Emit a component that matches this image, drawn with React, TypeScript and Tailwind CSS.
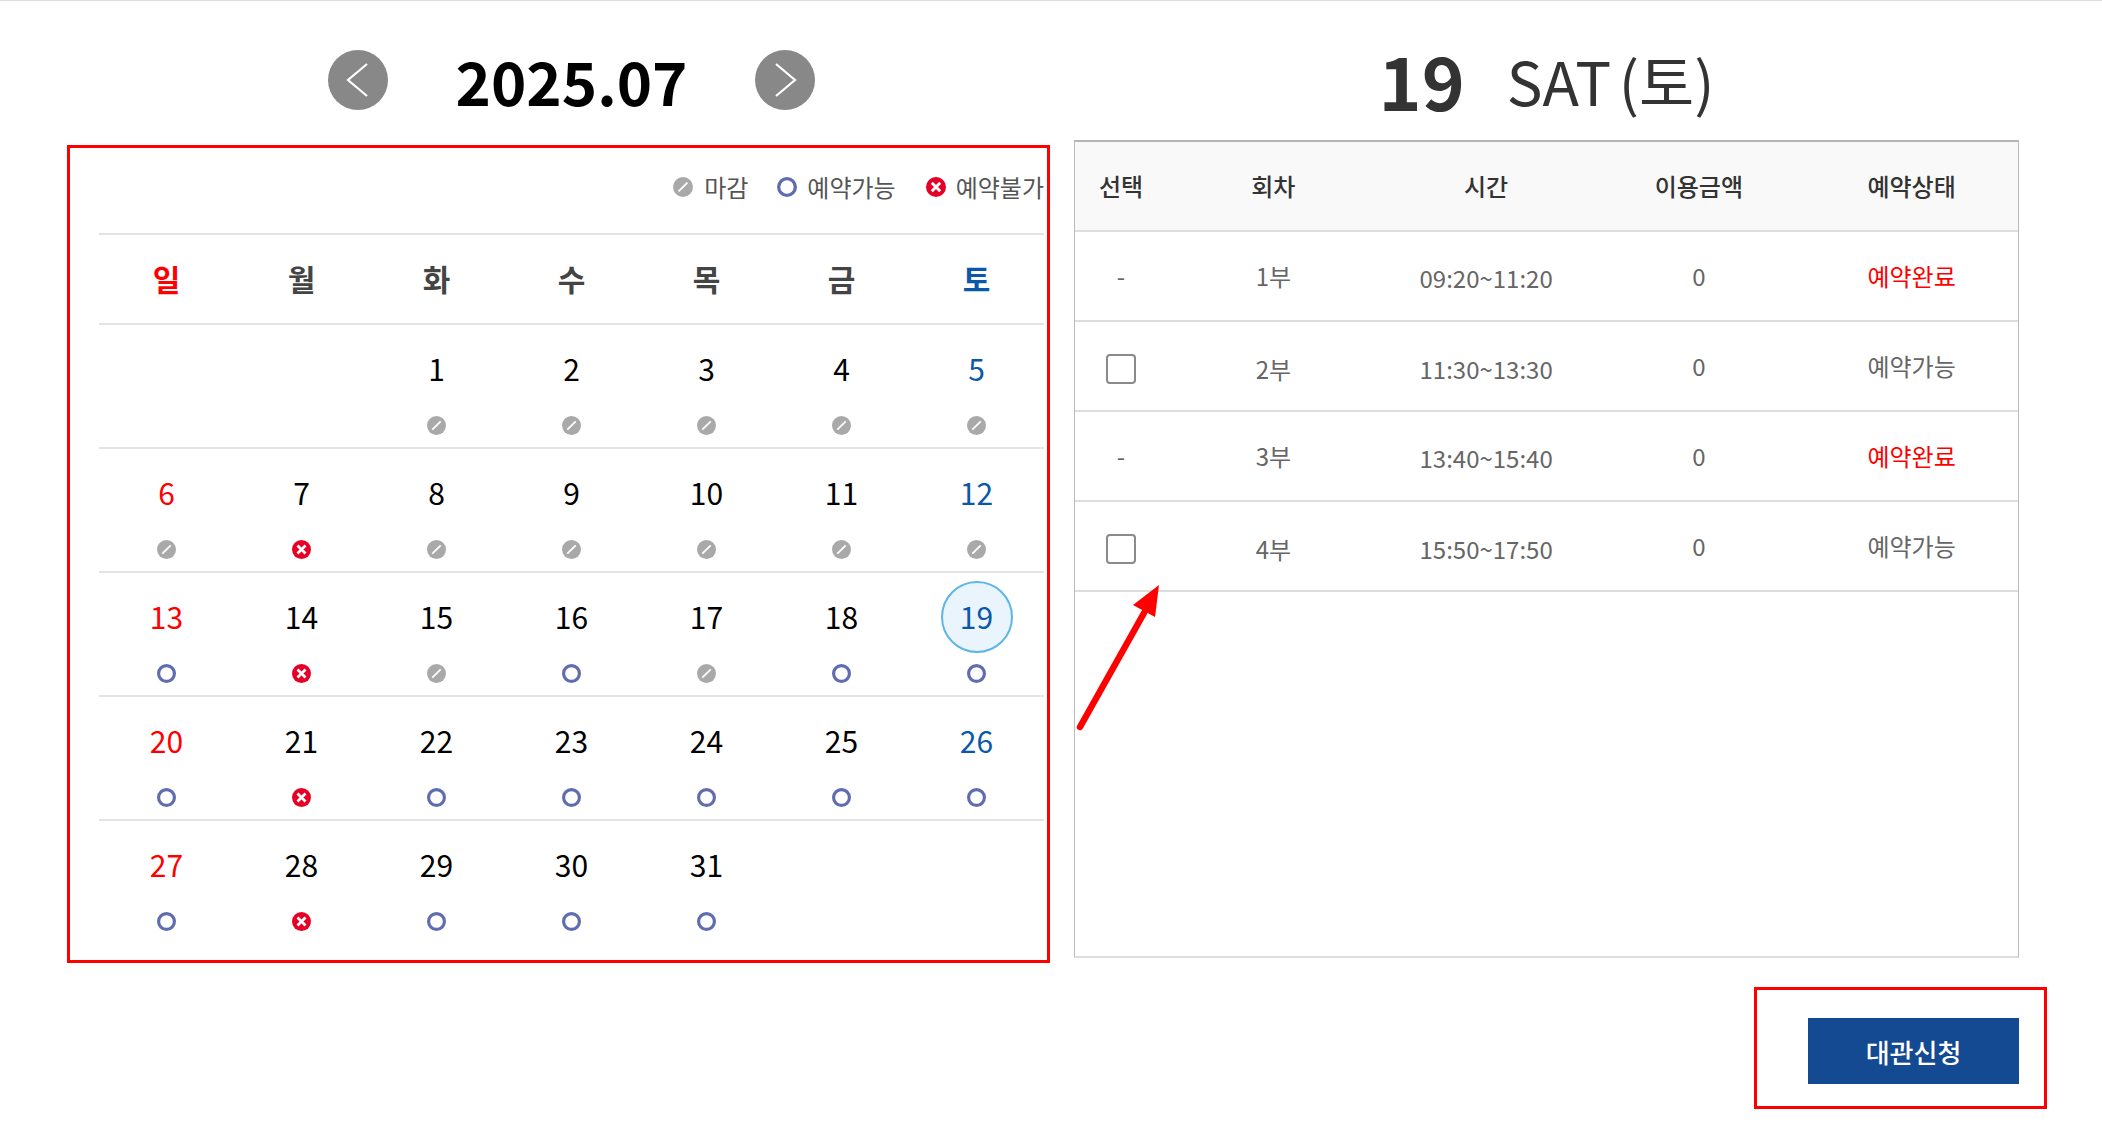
type Status = "closed" | "open" | "blocked";

function StatusIcon({ status, size = 19 }: { status: Status; size?: number }) {
  if (status === "closed") {
    return (
      <svg width={size} height={size} viewBox="0 0 18 18" className="block">
        <circle cx="9" cy="9" r="9" fill="#a9a9a9" />
        <path d="M5 13 13 5" stroke="#fff" strokeWidth="1.7" />
      </svg>
    );
  }
  if (status === "open") {
    return (
      <svg width={size} height={size} viewBox="0 0 18 18" className="block">
        <circle cx="9" cy="9" r="7.5" fill="#fff" stroke="#5f6cb0" strokeWidth="3" />
      </svg>
    );
  }
  return (
    <svg width={size} height={size} viewBox="0 0 18 18" className="block">
      <circle cx="9" cy="9" r="9" fill="#e60026" />
      <path d="M5.2 5.2 12.8 12.8M12.8 5.2 5.2 12.8" stroke="#fff" strokeWidth="2.6" />
    </svg>
  );
}

const weekdays = ["일", "월", "화", "수", "목", "금", "토"];

const c: Status = "closed";
const o: Status = "open";
const b: Status = "blocked";

// null = empty cell before/after the month
const weeks: ({ day: number; status: Status } | null)[][] = [
  [null, null, { day: 1, status: c }, { day: 2, status: c }, { day: 3, status: c }, { day: 4, status: c }, { day: 5, status: c }],
  [{ day: 6, status: c }, { day: 7, status: b }, { day: 8, status: c }, { day: 9, status: c }, { day: 10, status: c }, { day: 11, status: c }, { day: 12, status: c }],
  [{ day: 13, status: o }, { day: 14, status: b }, { day: 15, status: c }, { day: 16, status: o }, { day: 17, status: c }, { day: 18, status: o }, { day: 19, status: o }],
  [{ day: 20, status: o }, { day: 21, status: b }, { day: 22, status: o }, { day: 23, status: o }, { day: 24, status: o }, { day: 25, status: o }, { day: 26, status: o }],
  [{ day: 27, status: o }, { day: 28, status: b }, { day: 29, status: o }, { day: 30, status: o }, { day: 31, status: o }, null, null],
];

const sessions = [
  { name: "1부", time: "09:20~11:20", state: "예약완료", done: true, nudge: "" },
  { name: "2부", time: "11:30~13:30", state: "예약가능", done: false, nudge: "pt-[6px]" },
  { name: "3부", time: "13:40~15:40", state: "예약완료", done: true, nudge: "" },
  { name: "4부", time: "15:50~17:50", state: "예약가능", done: false, nudge: "pt-[5px]" },
];

const colsClass = "grid grid-cols-[92px_repeat(4,1fr)] items-center text-center";

function dayColor(col: number) {
  if (col === 0) return "text-[#ff0000]";
  if (col === 6) return "text-[#0b58a8]";
  return "text-black";
}

function NavButton({ dir }: { dir: "prev" | "next" }) {
  return (
    <button className="flex h-[60px] w-[60px] items-center justify-center rounded-full bg-[#888888]">
      <svg width="24" height="36" viewBox="0 0 24 36" fill="none">
        <path
          d={dir === "prev" ? "M22 2 3 18l19 16" : "M2 2l19 16L2 34"}
          transform={dir === "prev" ? "translate(-1 0)" : "translate(1 0)"}
          stroke="#fff"
          strokeWidth="2.2"
        />
      </svg>
    </button>
  );
}

function Calendar() {
  return (
    <div className="w-[983px] border-[3px] border-[#ff0000] pl-[29px] pr-[3px]">
      {/* Legend */}
      <div className="flex h-[85px] items-center justify-end pb-[8px] text-[24px] leading-none text-[#555555]">
        <StatusIcon status="closed" size={20} />
        <span className="ml-[11px]">마감</span>
        <span className="ml-[29px]">
          <StatusIcon status="open" size={20} />
        </span>
        <span className="ml-[10px]">예약가능</span>
        <span className="ml-[30px]">
          <StatusIcon status="blocked" size={20} />
        </span>
        <span className="ml-[10px]">예약불가</span>
      </div>

      {/* Weekdays */}
      <div className="grid h-[90px] grid-cols-7 items-center border-t-2 border-[#e3e3e3] pb-[2px] text-center text-[30px] font-bold leading-none">
        {weekdays.map((w, i) => (
          <div key={w} className={i === 0 ? "text-[#ff0000]" : i === 6 ? "text-[#0b58a8]" : "text-[#444444]"}>
            {w}
          </div>
        ))}
      </div>

      {/* Weeks */}
      {weeks.map((week, r) => (
        <div key={r} className="grid h-[124px] grid-cols-7 border-t-2 border-[#e3e3e3]">
          {week.map((cell, i) => (
            <div key={i} className="flex flex-col items-center pt-[8px]">
              {cell && (
                <>
                  <div
                    className={`flex h-[72px] w-[72px] items-center justify-center rounded-full pb-[2px] text-[30px] leading-none ${dayColor(i)} ${
                      cell.day === 19 ? "border-2 border-[#5cb6e8] bg-[#eaf4fd]" : ""
                    }`}
                  >
                    {cell.day}
                  </div>
                  <div className="mt-[11px]">
                    <StatusIcon status={cell.status} />
                  </div>
                </>
              )}
            </div>
          ))}
        </div>
      ))}
      <div className="h-[17px]" />
    </div>
  );
}

function SessionTable() {
  return (
    <div className="h-[818px] border-x border-t-2 border-b-2 border-x-[#bbbbbb] border-t-[#b5b5b5] border-b-[#dddddd] text-[24px] leading-none text-[#666666]">
      <div className={`${colsClass} h-[90px] border-b-2 border-[#dddddd] bg-[#f9f9f9] font-medium text-[#333333]`}>
        <div>선택</div>
        <div>회차</div>
        <div>시간</div>
        <div>이용금액</div>
        <div>예약상태</div>
      </div>
      {sessions.map((s) => (
        <div key={s.name} className={`${colsClass} h-[90px] border-b-2 border-[#dddddd]`}>
          <div className={`flex justify-center ${s.nudge}`}>
            {s.done ? (
              <span>-</span>
            ) : (
              <span className="block h-[30px] w-[30px] rounded-[4px] border-2 border-[#8a8a8a] bg-white" />
            )}
          </div>
          <div className={s.nudge}>{s.name}</div>
          <div className={s.done ? "pt-[4px]" : s.nudge}>{s.time}</div>
          <div>0</div>
          <div className={s.done ? "text-[#ff0000]" : ""}>{s.state}</div>
        </div>
      ))}
    </div>
  );
}

export default function App() {
  return (
    <div className="relative flex h-[1138px] w-full overflow-hidden border-t border-[#dddddd] bg-white font-['Noto_Sans_CJK_KR','Noto_Sans',sans-serif]">
      {/* Left: month calendar */}
      <div className="ml-[67px] w-[983px]">
        <div className="flex h-[144px] items-start justify-center pl-[26px] pt-[49px]">
          <NavButton dir="prev" />
          <div className="mx-[68px] -mt-[5px] text-[60px] font-bold leading-[70px] text-black">2025.07</div>
          <NavButton dir="next" />
        </div>
        <Calendar />
      </div>

      {/* Right: sessions of the selected day */}
      <div className="ml-[24px] w-[945px]">
        <div className="flex h-[139px] items-center justify-center pt-[18px] leading-none text-[#333333]">
          <span className="text-[73px] font-bold">19</span>
          <span className="ml-[42px] text-[60px] [word-spacing:-6px]">SAT (토)</span>
        </div>
        <SessionTable />
        <div className="-mr-[28px] ml-auto mt-[29px] flex h-[122px] w-[293px] justify-end border-[3px] border-[#ff0000] pr-[25px] pt-[28px]">
          <button className="h-[66px] w-[211px] bg-[#134a92] text-[26px] font-medium text-white">대관신청</button>
        </div>
      </div>

      {/* Annotation arrow */}
      <svg className="absolute left-[1070px] top-[570px]" width="100" height="170" viewBox="0 0 100 170">
        <path d="M10 156 74 42" stroke="#ff0000" strokeWidth="6.5" strokeLinecap="round" />
        <path d="M89 14 63 34 85 46Z" fill="#ff0000" />
      </svg>
    </div>
  );
}
